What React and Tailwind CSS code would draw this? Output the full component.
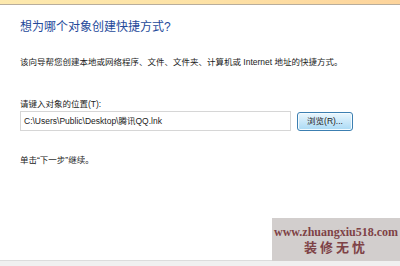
import React from 'react';

const App = () => {
  return (
    <div className="w-[400px] h-[266px] bg-white flex flex-col overflow-hidden" style={{ fontFamily: '"Liberation Sans", "Noto Sans CJK SC", sans-serif' }}>
      <div className="h-[4px] bg-gradient-to-r from-[#fde9ae] via-[#fde2a6] to-[#fdd49c]" />
      <div className="h-[1px] bg-[#b8ad9c]" />
      <div className="flex-1 flex flex-col px-[20px] relative">
        <h1 className="mt-[14px] text-[12px] leading-[16px] text-[#24499a]">想为哪个对象创建快捷方式?</h1>
        <p className="mt-[21px] text-[8.5px] leading-[12px] text-[#222]">
          该向导帮您创建本地或网络程序、文件、文件夹、计算机或 Internet 地址的快捷方式。
        </p>
        <label className="mt-[30px] text-[8.5px] leading-[12px] text-[#222]">请键入对象的位置(T):</label>
        <div className="mt-[1px] flex items-center gap-[6px]">
          <div className="w-[271px] h-[20px] border border-[#d6d6d6] flex items-center px-[3px] text-[8.5px] text-[#222]">
            C:\Users\Public\Desktop\腾讯QQ.lnk
          </div>
          <button className="w-[56px] h-[19px] rounded-[3px] border border-[#3c7fb1] bg-gradient-to-b from-[#eaf6fd] to-[#a9daf5] text-[8.5px] text-[#222] shadow-[inset_0_0_0_1px_#f4fbff]">
            浏览(R)...
          </button>
        </div>
        <p className="mt-[23px] text-[8.5px] leading-[12px] text-[#222]">单击“下一步”继续。</p>
        <div className="absolute right-0 bottom-[-1px] w-[128px] h-[43px] bg-[#d2cecd] flex flex-col items-center justify-center text-[#7e4246] font-bold leading-[16px]" style={{ fontFamily: '"Liberation Serif", "Noto Sans CJK SC", serif' }}>
          <span className="text-[12px]">www.zhuangxiu518.com</span>
          <span className="text-[13px] tracking-[3px]">装修无忧</span>
        </div>
      </div>
      <div className="h-[1px] bg-[#dcdcdc]" />
      <div className="h-[5px] bg-[#f0f0f0]" />
    </div>
  );
};

export default App;
